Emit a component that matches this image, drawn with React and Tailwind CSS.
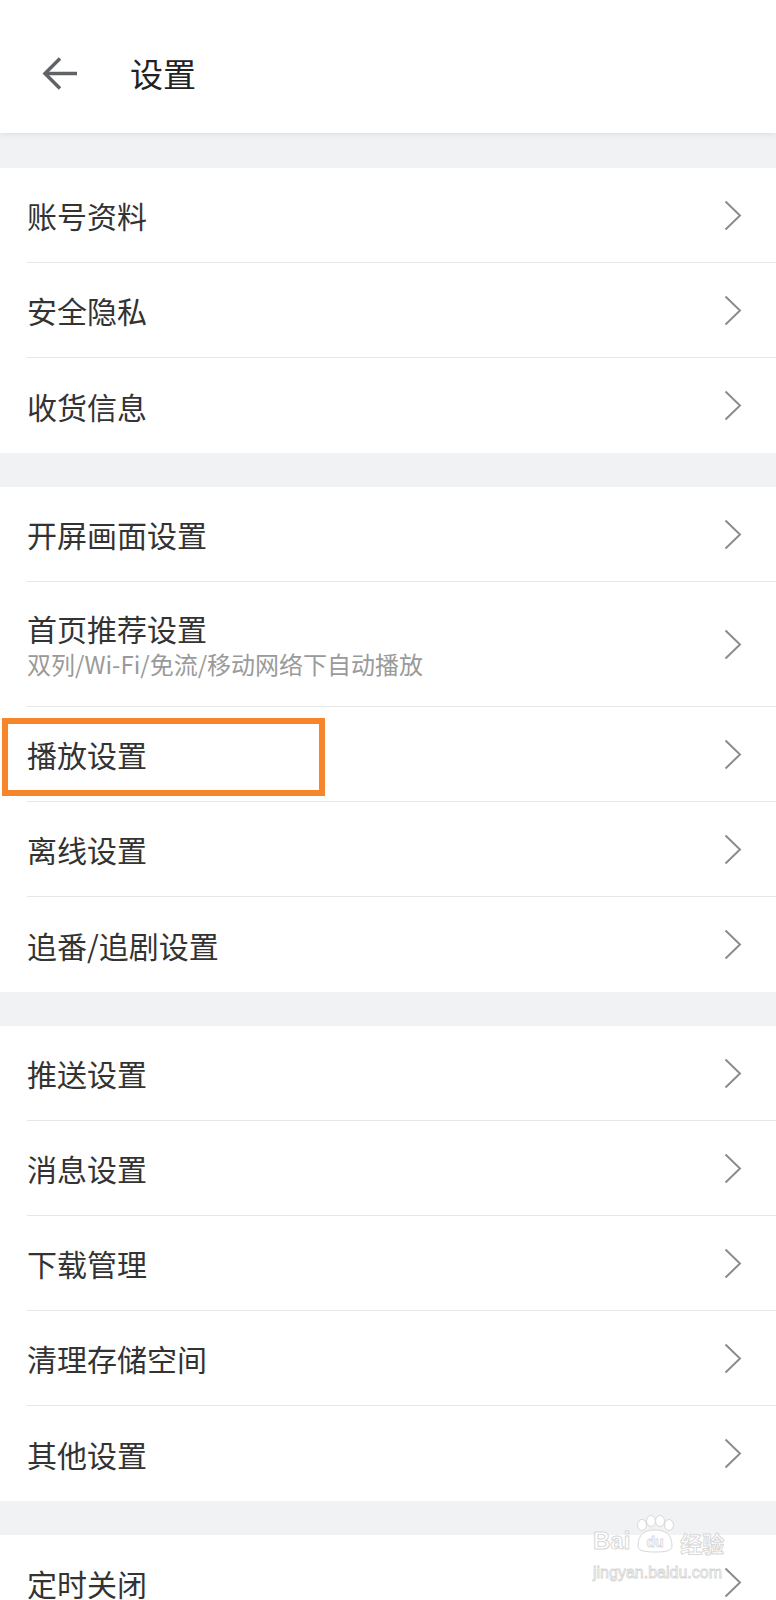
import React from 'react'

const FONT = "font-['Noto_Sans_CJK_SC','Noto_Sans',sans-serif]"

const groups = [
  [{ label: '账号资料' }, { label: '安全隐私' }, { label: '收货信息' }],
  [
    { label: '开屏画面设置' },
    { label: '首页推荐设置', sub: '双列/Wi-Fi/免流/移动网络下自动播放' },
    { label: '播放设置', marked: true },
    { label: '离线设置' },
    { label: '追番/追剧设置' },
  ],
  [
    { label: '推送设置' },
    { label: '消息设置' },
    { label: '下载管理' },
    { label: '清理存储空间' },
    { label: '其他设置' },
  ],
  [{ label: '定时关闭' }],
]

function Chevron() {
  return (
    <svg width="18" height="31" viewBox="0 0 18 31" fill="none">
      <polyline points="1.5,1.5 16,15.5 1.5,29.5" stroke="#8c8c8c" strokeWidth="2" strokeLinejoin="miter" />
    </svg>
  )
}

function BackArrow() {
  return (
    <svg width="36" height="35" viewBox="0 0 36 35" fill="none">
      <line x1="3" y1="17.5" x2="35" y2="17.5" stroke="#5f6368" strokeWidth="3.5" />
      <polyline points="18,2.5 3,17.5 18,32.5" stroke="#5f6368" strokeWidth="3.5" fill="none" />
    </svg>
  )
}

function Row({ item, last }) {
  return (
    <div className="relative bg-white pl-[27px]">
      {item.marked && (
        <div className="absolute left-[2px] top-[11px] w-[323px] h-[78px] border-[6px] border-[#f7862b]" />
      )}
      <div
        className={
          'flex items-center justify-between pr-[34px] ' +
          (item.sub ? 'h-[125px] ' : 'h-[95px] ') +
          (last ? '' : 'border-b border-[#e6e6e6]')
        }
      >
        <div className="flex flex-col">
          <span className="text-[30px] leading-none text-[#333333]">{item.label}</span>
          {item.sub && (
            <span className="mt-[9px] text-[24px] leading-none text-[#9a9a9a]">{item.sub}</span>
          )}
        </div>
        <Chevron />
      </div>
    </div>
  )
}

function Watermark() {
  return (
    <div className="absolute left-[593px] top-[1515px] flex flex-col items-start pointer-events-none">
      <div className="flex items-end gap-[3px]">
        <span className="text-[24px] leading-none font-bold text-white [-webkit-text-stroke:1px_#d8d8d8] font-['Liberation_Sans',sans-serif]">
          Bai
        </span>
        <svg width="44" height="38" viewBox="0 0 44 38" fill="none">
          <ellipse cx="9" cy="10" rx="4.5" ry="5.5" fill="white" stroke="#d8d8d8" />
          <ellipse cx="18" cy="6" rx="4.5" ry="5.5" fill="white" stroke="#d8d8d8" />
          <ellipse cx="27" cy="6" rx="4.5" ry="5.5" fill="white" stroke="#d8d8d8" />
          <ellipse cx="36" cy="10" rx="4.5" ry="5.5" fill="white" stroke="#d8d8d8" />
          <path d="M5 31 C5 19 12 15 22 15 C32 15 39 19 39 31 C39 36 32 37 22 37 C12 37 5 36 5 31Z" fill="white" stroke="#d8d8d8" />
          <text x="22" y="32" textAnchor="middle" fontSize="14" fontWeight="bold" fill="white" stroke="#d8d8d8" strokeWidth="0.8" fontFamily="Liberation Sans, sans-serif">du</text>
        </svg>
        <span className="text-[22px] leading-none font-bold text-white [-webkit-text-stroke:1px_#d8d8d8]">
          经验
        </span>
      </div>
      <span className="mt-[12px] text-[16px] leading-none text-white [-webkit-text-stroke:0.8px_#d4d4d4] font-['Liberation_Sans',sans-serif]">
        jingyan.baidu.com
      </span>
    </div>
  )
}

export default function App() {
  return (
    <div className={'relative w-[776px] h-[1600px] overflow-hidden bg-[#f1f2f3] ' + FONT}>
      <header className="relative z-10 h-[133px] pt-[13px] bg-white flex items-center shadow-[0_2px_6px_rgba(0,0,0,0.07)]">
        <div className="ml-[42px]">
          <BackArrow />
        </div>
        <h1 className="ml-[52px] text-[33px] leading-none text-[#222222]">设置</h1>
      </header>

      <div className="flex flex-col gap-[34px] pt-[35px]">
        {groups.map((g, gi) => (
          <div key={gi} className="bg-white">
            {g.map((item, i) => (
              <Row key={item.label} item={item} last={i === g.length - 1} />
            ))}
          </div>
        ))}
      </div>

      <Watermark />
    </div>
  )
}
